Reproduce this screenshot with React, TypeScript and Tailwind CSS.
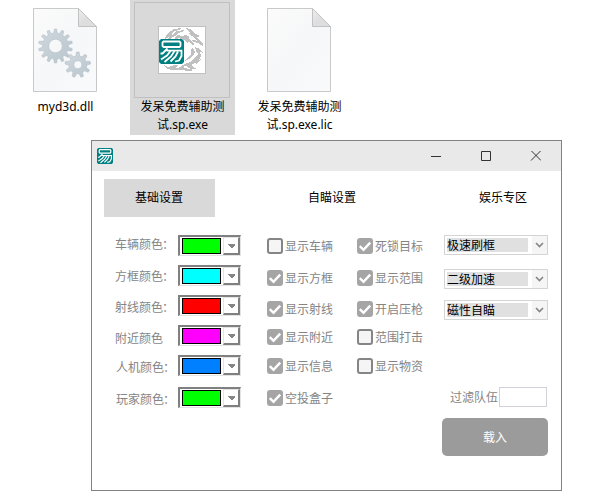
import React from "react";

const gearPath = (cx: number, cy: number, outer: number, inner: number, teeth: number) => {
  const step = (Math.PI * 2) / teeth;
  const pts: string[] = [];
  for (let i = 0; i < teeth; i++) {
    const a = i * step - Math.PI / 2;
    [[-0.3, inner], [-0.15, outer], [0.15, outer], [0.3, inner]].forEach(([o, r]) => {
      pts.push(`${(cx + Math.cos(a + o * step) * r).toFixed(2)} ${(cy + Math.sin(a + o * step) * r).toFixed(2)}`);
    });
  }
  return `M${pts.join("L")}Z`;
};

const ring = (cx: number, cy: number, r: number) =>
  `M${cx - r} ${cy}a${r} ${r} 0 1 0 ${2 * r} 0a${r} ${r} 0 1 0 ${-2 * r} 0Z`;

function Page({ gears = false }: { gears?: boolean }) {
  return (
    <svg width="64" height="85" viewBox="0 0 64 85" className="block">
      <defs>
        <linearGradient id="sheet" x1="0" y1="0" x2="1" y2="1">
          <stop offset="0" stopColor="#fbfbfb" />
          <stop offset="0.5" stopColor="#f6f7f8" />
          <stop offset="1" stopColor="#f9fafb" />
        </linearGradient>
        <linearGradient id="fold" x1="0" y1="0" x2="1" y2="1">
          <stop offset="0" stopColor="#eeeeee" />
          <stop offset="0.5" stopColor="#dedede" />
        </linearGradient>
        <linearGradient id="gear" x1="0" y1="0" x2="1" y2="1">
          <stop offset="0" stopColor="#d0d9df" />
          <stop offset="1" stopColor="#b9c4cc" />
        </linearGradient>
      </defs>
      <path d="M.5 .5H45L63.5 18.5V83.5H.5Z" fill="url(#sheet)" stroke="#c9c9c9" />
      <path d="M45.5 .5L63.5 18.5H45.5Z" fill="url(#fold)" stroke="#c2c2c2" />
      {gears && (
        <g fill="url(#gear)" fillRule="evenodd" stroke="#b3bfc8" strokeWidth=".6">
          <path d={gearPath(22.5, 38, 17, 13, 14) + ring(22.5, 38, 6.8)} />
          <path d={gearPath(44.8, 56.8, 12.8, 9, 9) + ring(44.8, 56.8, 4)} />
        </g>
      )}
    </svg>
  );
}

function Seal({ size }: { size: number }) {
  return (
    <svg width={size} height={size} viewBox="0 0 25 25" className="block">
      <path d="M2 0H23L25 2V23L23 25H2L0 23V2Z" fill="#008080" />
      <g fill="none" stroke="#fff" strokeWidth="1.8">
        <path d="M4.5 2.5H20.5L21.5 3.5V7L20.5 8H4.5L3.5 7V3.5Z" />
        <path d="M1.5 14.5H3.5L8.5 9.5M7.5 11.7H22.5V17L20 21.5L16 22.5" />
        <path d="M11.5 12L8 16.5L2 20.5M15.5 12L12 17.5L5.5 23M19 12.5L16.5 17.5L11.5 22.5" />
      </g>
    </svg>
  );
}

function DragonIcon() {
  return (
    <div className="relative h-12 w-12 border border-[#c0c0c0] bg-white">
      <svg width="46" height="46" viewBox="0 0 46 46" shapeRendering="crispEdges" className="block">
        <g fill="#c0c0c0">
          <path d="M6 12L7 8L12 4L15 2L22 1L20 3L15 4L12 7L13 8L18 4L25 3L23 5L19 6L16 9L11 12H9L11 8L8 11Z" />
          <path d="M26 1L31 2L34 5L37 7L41 9L38 10L40 13L44 17V19L39 16L35 15L32 13H35L38 14L35 10L32 9L29 6L31 6L28 3Z" />
          <path d="M15 11L19 8L22 9L27 8L31 10L29 11L33 15L36 17L34 18L30 15L28 16L26 14L25 13L20 11L17 12Z" />
          <path d="M36 20L41 22L44 26L41 25L42 29L40 33L36 36L31 39L26 39L22 42L17 43L21 40L26 37L31 35L36 31L39 27L37 24Z" />
          <path d="M32 22L34 21L36 25L34 29L30 32L26 34L29 30L32 27Z" />
          <path d="M5 38L9 40L15 38H19L16 41L23 40L30 42L36 43L30 44L22 43L12 43L7 41Z" />
          <path d="M26 37L31 37L35 41L38 42L32 42L28 40ZM37 34L42 32L40 35L37 37Z" />
        </g>
      </svg>
      <div className="absolute left-0 top-3"><Seal size={25} /></div>
    </div>
  );
}

const colors = [
  { label: "车辆颜色", colon: true, fill: "bg-[#00ff00]", row: "mt-0", text: "mt-0" },
  { label: "方框颜色", colon: true, fill: "bg-[#00ffff]", row: "mt-[9px]", text: "mt-0.5" },
  { label: "射线颜色", colon: true, fill: "bg-[#ff0000]", row: "mt-[9px]", text: "mt-[3px]" },
  { label: "附近颜色", colon: false, fill: "bg-[#ff00ff]", row: "mt-[9px]", text: "mt-1" },
  { label: "人机颜色", colon: true, fill: "bg-[#0080ff]", row: "mt-[9px]", text: "mt-[3px] pl-px" },
  { label: "玩家颜色", colon: true, fill: "bg-[#00ff00]", row: "mt-[11px]", text: "mt-[3px] pl-px" },
];

function ColorPicker({ fill }: { fill: string }) {
  return (
    <div className="flex h-[21px] w-[63px] shrink-0 border-2 border-r border-b border-t-[#808080] border-l-[#808080] border-r-[#e3e3e3] border-b-[#e3e3e3] bg-white pl-[2px]">
      <div className={`mt-px h-4 w-[39px] border border-black ${fill}`} />
      <div className="ml-[2px] flex h-[18px] w-[17px] items-center justify-center border border-r-2 border-b-2 border-t-[#e3e3e3] border-l-[#e3e3e3] border-r-[#808080] border-b-[#808080]">
        <svg width="7" height="4" viewBox="0 0 7 4" shapeRendering="crispEdges"><path d="M0 0H7V1L4 4H3L0 1Z" fill="#858585" /></svg>
      </div>
    </div>
  );
}

type Option = { label: string; checked: boolean; gap: string };
const display: Option[] = [
  { label: "显示车辆", checked: false, gap: "mt-0" },
  { label: "显示方框", checked: true, gap: "mt-4" },
  { label: "显示射线", checked: true, gap: "mt-[15px]" },
  { label: "显示附近", checked: true, gap: "mt-3" },
  { label: "显示信息", checked: true, gap: "mt-[13px]" },
  { label: "空投盒子", checked: true, gap: "mt-4" },
];
const combat: Option[] = [
  { label: "死锁目标", checked: true, gap: "mt-0" },
  { label: "显示范围", checked: true, gap: "mt-4" },
  { label: "开启压枪", checked: true, gap: "mt-[15px]" },
  { label: "范围打击", checked: false, gap: "mt-3" },
  { label: "显示物资", checked: false, gap: "mt-[13px]" },
];

function Options({ items }: { items: Option[] }) {
  return (
    <div className="flex w-[90px] flex-col pt-[3px] text-[#858585]">
      {items.map((o) => (
        <div key={o.label} className={`flex h-4 items-center gap-[2px] ${o.gap}`}>
          <span className={`block h-4 w-4 rounded-[3px] ${o.checked ? "bg-[#a5a5a5]" : "border-2 border-[#858585] bg-[#f5f5f5]"}`}>
            {o.checked && (
              <svg width="16" height="16" viewBox="0 0 16 16"><path d="M2.8 8.2L6.5 11.8L13.2 4.6" fill="none" stroke="#fff" strokeWidth="2.4" /></svg>
            )}
          </span>
          <span className="whitespace-nowrap">{o.label}</span>
        </div>
      ))}
    </div>
  );
}

function Select({ label, gap }: { label: string; gap: string }) {
  return (
    <div className={`flex h-5 w-[104px] border border-[#d4d4d4] bg-white ${gap}`}>
      <div className="ml-[2px] mt-[2px] flex h-[14px] w-[81px] items-center bg-[#e0e0e0] text-black">{label}</div>
      <div className="ml-1 flex flex-1 items-center justify-center bg-[#f5f5f5]">
        <svg width="9" height="6" viewBox="0 0 9 6"><path d="M1 1L4.5 4.5L8 1" fill="none" stroke="#858585" strokeWidth="1.6" /></svg>
      </div>
    </div>
  );
}

export default function App() {
  return (
    <div lang="zh-CN" className="h-[501px] w-[590px] overflow-hidden bg-white font-['Noto_Sans','Noto_Sans_CJK_SC',sans-serif] text-xs leading-[18px] text-black">
      <div className="flex h-[140px] items-start text-center">
        <div className="ml-[13px] flex w-[105px] flex-col pt-2">
          <div className="pl-5"><Page gears /></div>
          <span className="mt-[5px]">myd3d.dll</span>
        </div>
        <div className="ml-3 flex h-[135px] w-[105px] flex-col bg-[#d9d9d9] pt-[2px]">
          <div className="ml-1 flex h-24 w-24 items-center justify-center border border-[#c0c0c0]">
            <DragonIcon />
          </div>
          <span>发呆免费辅助测<br />试.sp.exe</span>
        </div>
        <div className="ml-3 flex w-[105px] flex-col pt-2">
          <div className="pl-5"><Page /></div>
          <span className="mt-[5px]">发呆免费辅助测<br />试.sp.exe.lic</span>
        </div>
      </div>

      <div className="ml-[91px] h-[351px] w-[471px] border border-[#828282] bg-white font-['Noto_Sans_CJK_SC',sans-serif]">
        <div className="flex h-[30px] items-center bg-[#e9e9e9] pl-[5px]">
          <Seal size={16} />
          <svg width="110" height="10" viewBox="0 0 110 10" className="ml-[318px]" fill="none" stroke="#333">
            <path d="M0 5.5H10M50.5 .5H59.5V9.5H50.5Z" />
            <path d="M100.5 0L110 9.5M109.5 0L100 9.5" />
          </svg>
        </div>
        <div className="mt-2 flex h-[38px] pl-3">
          <div className="flex w-[111px] items-center justify-center bg-[#d9d9d9] pb-0.5 pr-px">基础设置</div>
          <div className="ml-[62px] flex w-[111px] items-center justify-center pb-0.5 pr-px">自瞄设置</div>
          <div className="ml-[60px] flex w-[111px] items-center justify-center pb-0.5 pr-px">娱乐专区</div>
        </div>

        <div className="mt-[18px] flex">
          <div className="ml-[23px] flex w-[126px] flex-col text-[#858585]">
            {colors.map((c) => (
              <div key={c.label} className={`flex h-[21px] ${c.row}`}>
                <div className={`w-[63px] shrink-0 whitespace-nowrap ${c.text}`}>
                  {c.label}
                  {c.colon && <span className="-ml-px">：</span>}
                </div>
                <ColorPicker fill={c.fill} />
              </div>
            ))}
          </div>
          <div className="ml-[26px] flex">
            <Options items={display} />
            <Options items={combat} />
          </div>
          <div className="-ml-[5px] flex w-[106px] flex-col">
            <div className="flex flex-col pl-[2px]">
              <Select label="极速刷框" gap="mt-0" />
              <Select label="二级加速" gap="mt-[14px]" />
              <Select label="磁性自瞄" gap="mt-[11px]" />
            </div>
            <div className="mt-[67px] flex h-5 items-center justify-end pr-px text-[#858585]">
              <span className="mr-px">过滤队伍</span>
              <div className="h-5 w-12 border border-[#d5d0da] bg-white" />
            </div>
            <div className="mt-[11px] flex h-[38px] items-center justify-center rounded-[5px] bg-[#9b9b9b] text-white">载入</div>
          </div>
        </div>
      </div>
    </div>
  );
}
